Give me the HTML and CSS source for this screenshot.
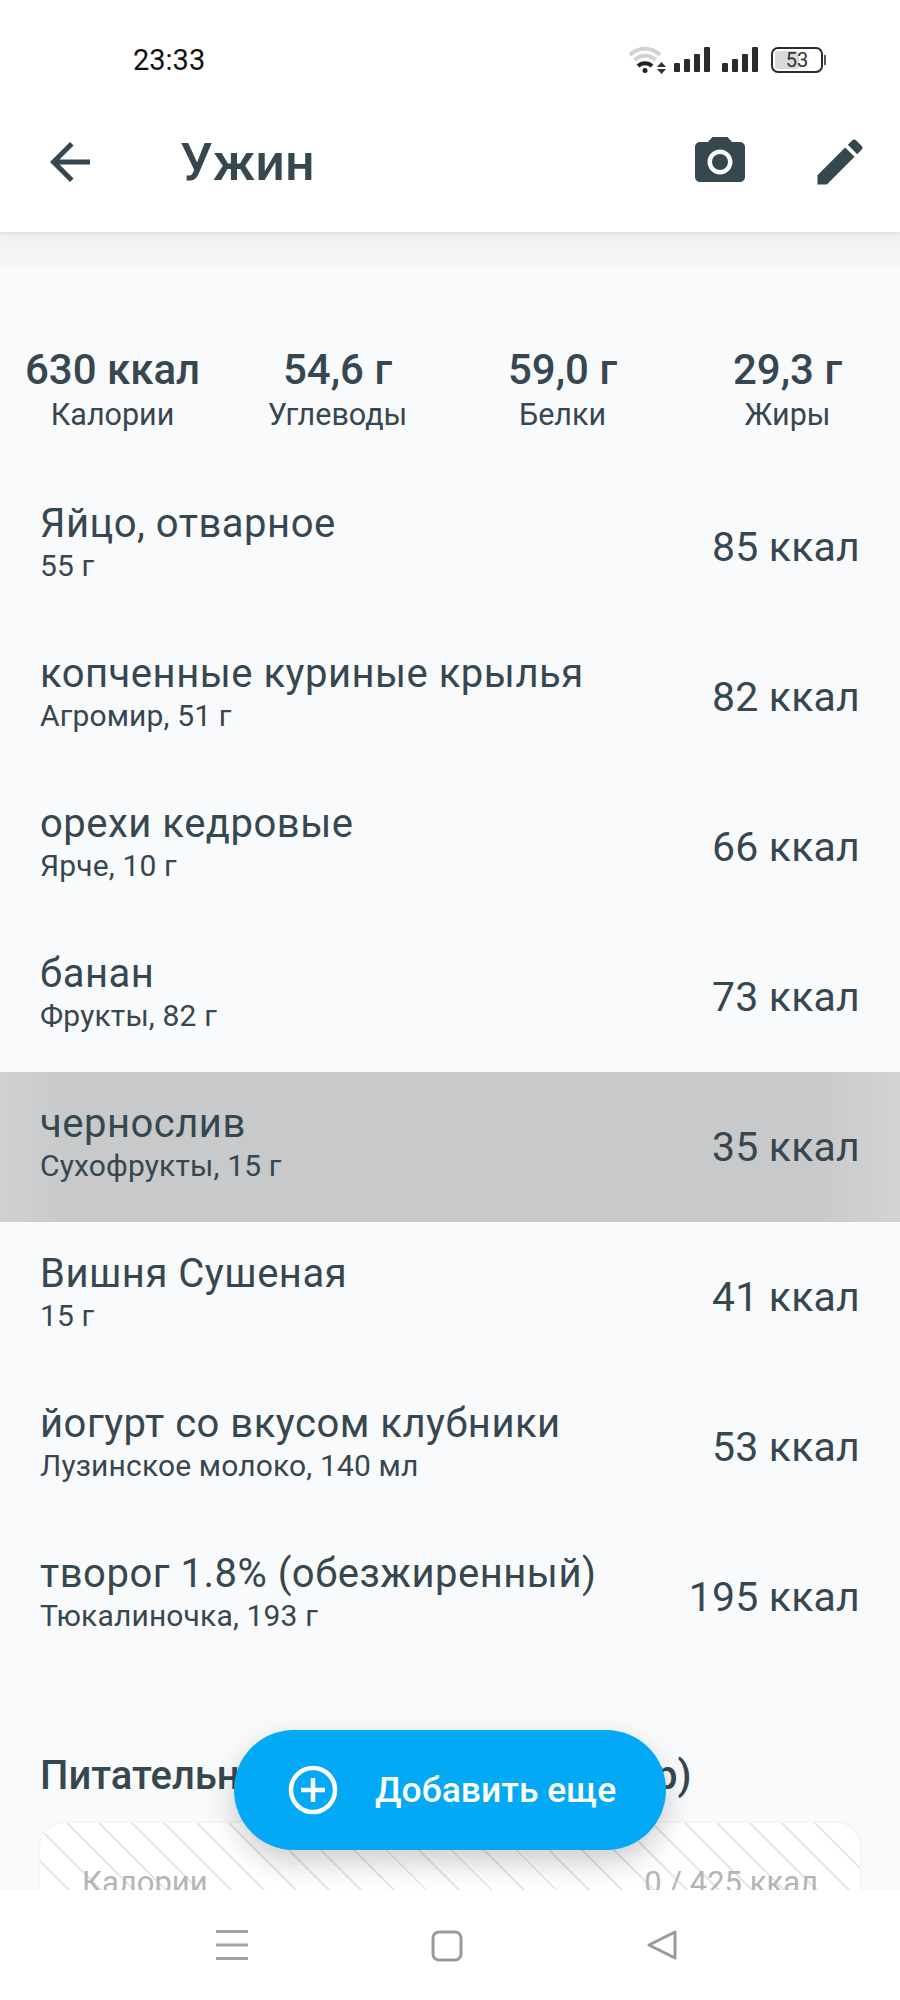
FILE: index.html
```html
<!DOCTYPE html>
<html lang="ru">
<head>
	<meta charset="UTF-8">
	<meta name="viewport" content="width=device-width, initial-scale=1.0">
	<title>Ужин</title>
	<link rel="stylesheet" href="styles.css">
</head>
<body>
	<div class="screen">
		<!-- Status bar and title -->
		<header class="top">
			<div class="status">
				<span class="clock">23:33</span>
				<svg class="status-icons" width="200" height="30" viewBox="0 0 200 30">
					<g fill="none" stroke-width="4">
						<path d="M2 10 A21 21 0 0 1 32 10" stroke="#d2d2d2"/>
						<path d="M6.500 15 A15 15 0 0 1 27.500 15" stroke="#d2d2d2"/>
						<path d="M10 21 A10 10 0 0 1 24 21" stroke="#222"/>
					</g>
					<circle cx="17" cy="25.500" r="2.500" fill="#222"/>
					<path d="M29 22 L33.500 17 L38 22 Z M29 24 L38 24 L33.500 29 Z" fill="#333"/>
					<rect x="46" y="18" width="6" height="9" rx="1" fill="#2b2b2b"/>
					<rect x="56" y="14" width="6" height="13" rx="1" fill="#2b2b2b"/>
					<rect x="66" y="9" width="6" height="18" rx="1" fill="#2b2b2b"/>
					<rect x="76" y="2" width="6" height="25" rx="1" fill="#2b2b2b"/>
					<rect x="94" y="18" width="6" height="9" rx="1" fill="#2b2b2b"/>
					<rect x="104" y="14" width="6" height="13" rx="1" fill="#2b2b2b"/>
					<rect x="114" y="9" width="6" height="18" rx="1" fill="#2b2b2b"/>
					<rect x="124" y="2" width="6" height="25" rx="1" fill="#2b2b2b"/>
					<rect x="147" y="6" width="24" height="18" rx="3" fill="#dadada"/>
					<rect x="144" y="3" width="50" height="24" rx="6" fill="none" stroke="#2b2b2b" stroke-width="2"/>
					<rect x="196" y="10" width="2" height="10" fill="#555"/>
					<text class="battery-text" x="169" y="22">53</text>
				</svg>
			</div>
			<div class="title-bar">
				<svg class="back" width="60" height="60" viewBox="0 0 24 24"><path d="M20 11H7.830l5.590-5.590L12 4l-8 8 8 8 1.410-1.410L7.830 13H20v-2z"/></svg>
				<h1>Ужин</h1>
				<svg class="act" width="60" height="60" viewBox="0 0 24 24"><path fill-rule="evenodd" d="M9 2L7.170 4H4c-1.100 0-2 .9-2 2v12c0 1.100.9 2 2 2h16c1.100 0 2-.9 2-2V6c0-1.100-.9-2-2-2h-3.170L15 2H9zm3 15c-2.760 0-5-2.240-5-5s2.240-5 5-5 5 2.240 5 5-2.240 5-5 5z"/><circle cx="12" cy="12" r="3.200"/></svg>
				<svg class="act" width="60" height="60" viewBox="0 0 24 24"><path d="M3 17.250V21h3.750L17.810 9.940l-3.750-3.750L3 17.250zM20.710 7.040c.39-.39.39-1.020 0-1.410l-2.340-2.340c-.39-.39-1.020-.39-1.410 0l-1.830 1.830 3.750 3.750 1.830-1.830z"/></svg>
			</div>
		</header>

		<main class="content">
			<div class="totals">
				<div class="total"><b>630 ккал</b><span>Калории</span></div>
				<div class="total"><b>54,6 г</b><span>Углеводы</span></div>
				<div class="total"><b>59,0 г</b><span>Белки</span></div>
				<div class="total"><b>29,3 г</b><span>Жиры</span></div>
			</div>

			<div class="food">
				<div class="food-text"><div class="food-name">Яйцо, отварное</div><div class="food-sub">55 г</div></div>
				<div class="food-kcal">85 ккал</div>
			</div>
			<div class="food">
				<div class="food-text"><div class="food-name">копченные куриные крылья</div><div class="food-sub">Агромир, 51 г</div></div>
				<div class="food-kcal">82 ккал</div>
			</div>
			<div class="food">
				<div class="food-text"><div class="food-name">орехи кедровые</div><div class="food-sub">Ярче, 10 г</div></div>
				<div class="food-kcal">66 ккал</div>
			</div>
			<div class="food">
				<div class="food-text"><div class="food-name">банан</div><div class="food-sub">Фрукты, 82 г</div></div>
				<div class="food-kcal">73 ккал</div>
			</div>
			<div class="food pressed">
				<div class="food-text"><div class="food-name">чернослив</div><div class="food-sub">Сухофрукты, 15 г</div></div>
				<div class="food-kcal">35 ккал</div>
			</div>
			<div class="food">
				<div class="food-text"><div class="food-name">Вишня Сушеная</div><div class="food-sub">15 г</div></div>
				<div class="food-kcal">41 ккал</div>
			</div>
			<div class="food">
				<div class="food-text"><div class="food-name">йогурт со вкусом клубники</div><div class="food-sub">Лузинское молоко, 140 мл</div></div>
				<div class="food-kcal">53 ккал</div>
			</div>
			<div class="food">
				<div class="food-text"><div class="food-name">творог 1.8% (обезжиренный)</div><div class="food-sub">Тюкалиночка, 193 г</div></div>
				<div class="food-kcal">195 ккал</div>
			</div>

			<h2>Питательные вещества (на обзор)</h2>
			<div class="nutrients">
				<div class="nutrient"><span>Калории</span><span>0 / 425 ккал</span></div>
			</div>
		</main>

		<!-- Android navigation -->
		<nav class="nav">
			<svg width="32" height="30" viewBox="0 0 32 30"><path d="M0 1.500H32M0 15H32M0 28.500H32" stroke="#a3a3a3" stroke-width="3"/></svg>
			<svg width="32" height="32" viewBox="0 0 32 32"><rect x="2" y="2" width="28" height="28" rx="6" fill="none" stroke="#999" stroke-width="3"/></svg>
			<svg width="32" height="30" viewBox="0 0 32 30"><path d="M29 2 L3 15 L29 28 Z" fill="none" stroke="#999" stroke-width="3" stroke-linejoin="round"/></svg>
		</nav>

		<button class="fab">
			<svg width="50" height="50" viewBox="0 0 50 50"><circle cx="25" cy="25" r="22" fill="none" stroke="#fff" stroke-width="4.500"/><path d="M25 13V37M13 25H37" stroke="#fff" stroke-width="4.500"/></svg>
			<span>Добавить еще</span>
		</button>
	</div>
</body>
</html>
```

FILE: styles.css
```css
body {
	margin: 0;
	background-color: #f9fafc;
	font-family: Roboto, "Liberation Sans", sans-serif;
	color: #37474f;
}

.screen {
	position: relative;
	width: 900px;
	height: 2000px;
	overflow: hidden;
	display: flex;
	flex-direction: column;
}

/* Header */
.top {
	height: 232px;
	flex-shrink: 0;
	background-color: #fff;
	box-shadow: 0 1px 4px rgba(0, 0, 0, 0.12);
	position: relative;
	z-index: 1;
}

.status {
	height: 132px;
	padding: 44px 0 0 133px;
	box-sizing: border-box;
	display: flex;
	justify-content: space-between;
	align-items: flex-start;
}

.clock {
	font-size: 29px;
	line-height: 33px;
	color: #111;
}

.status-icons {
	margin: 1px 72px 0 0;
}

.battery-text {
	font-family: Roboto, sans-serif;
	font-size: 20px;
	fill: #333;
	text-anchor: middle;
}

.title-bar {
	display: flex;
	align-items: center;
	padding: 0 30px 0 40px;
	height: 60px;
}

.title-bar svg {
	fill: #37474f;
}

.title-bar h1 {
	margin: 0 0 0 80px;
	flex: 1;
	font-size: 52px;
	font-weight: 500;
}

.act {
	margin-left: 60px;
}

/* Scrolling part */
.content {
	flex: 1;
	overflow: hidden;
	background: linear-gradient(#f0f1f3, #f5f6f8 33px, #f9fafc 35px);
}

.totals {
	display: grid;
	grid-template-columns: repeat(4, 1fr);
	padding-top: 113px;
	height: 127px;
}

.total {
	display: flex;
	flex-direction: column;
	align-items: center;
}

.total b {
	font-size: 42px;
	line-height: 50px;
	font-weight: 500;
}

.total span {
	font-size: 30.500px;
	line-height: 40px;
}

.food {
	display: flex;
	justify-content: space-between;
	align-items: center;
	height: 150px;
	padding: 0 40px;
	box-sizing: border-box;
}

.food.pressed {
	background: linear-gradient(90deg, #d0d1d2, #c8c9cb 8%, #c8c9cb 90%, #d2d3d4);
}

.food-text {
	padding-bottom: 12px;
}

.food-name {
	font-size: 40px;
	line-height: 50px;
	letter-spacing: 0.5px;
}

.food-sub {
	font-size: 30px;
	line-height: 34px;
	letter-spacing: 0.15px;
}

.food-kcal {
	font-size: 41px;
	letter-spacing: 0.2px;
}

.content h2 {
	margin: 81px 0 24px 40px;
	font-size: 40px;
	line-height: 46px;
	font-weight: 500;
	white-space: nowrap;
}

.nutrients {
	margin: 0 40px;
	height: 300px;
	border-radius: 24px;
	background-color: #fff;
	background-image: repeating-linear-gradient(45deg, #e7e7e7 0, #e7e7e7 2px, transparent 2px, transparent 23px);
	box-shadow: 0 0 4px rgba(0, 0, 0, 0.06);
}

.nutrient {
	display: flex;
	justify-content: space-between;
	padding: 40px 42px 0;
	font-size: 31px;
	line-height: 40px;
	color: #b4b5b6;
}

/* Bottom bar */
.nav {
	height: 110px;
	flex-shrink: 0;
	background-color: #fff;
	display: flex;
	align-items: flex-start;
	justify-content: center;
	gap: 183px;
	padding: 40px 7px 0 0;
	box-sizing: border-box;
	position: relative;
}

.fab {
	position: absolute;
	left: 234px;
	top: 1730px;
	width: 432px;
	height: 120px;
	border: none;
	border-radius: 60px;
	background-color: #03a9f4;
	color: #fff;
	font-family: inherit;
	font-size: 35.500px;
	font-weight: 500;
	display: flex;
	align-items: center;
	padding: 0 0 0 54px;
	gap: 37px;
	box-shadow: 0 12px 30px rgba(0, 0, 0, 0.2);
}
```
